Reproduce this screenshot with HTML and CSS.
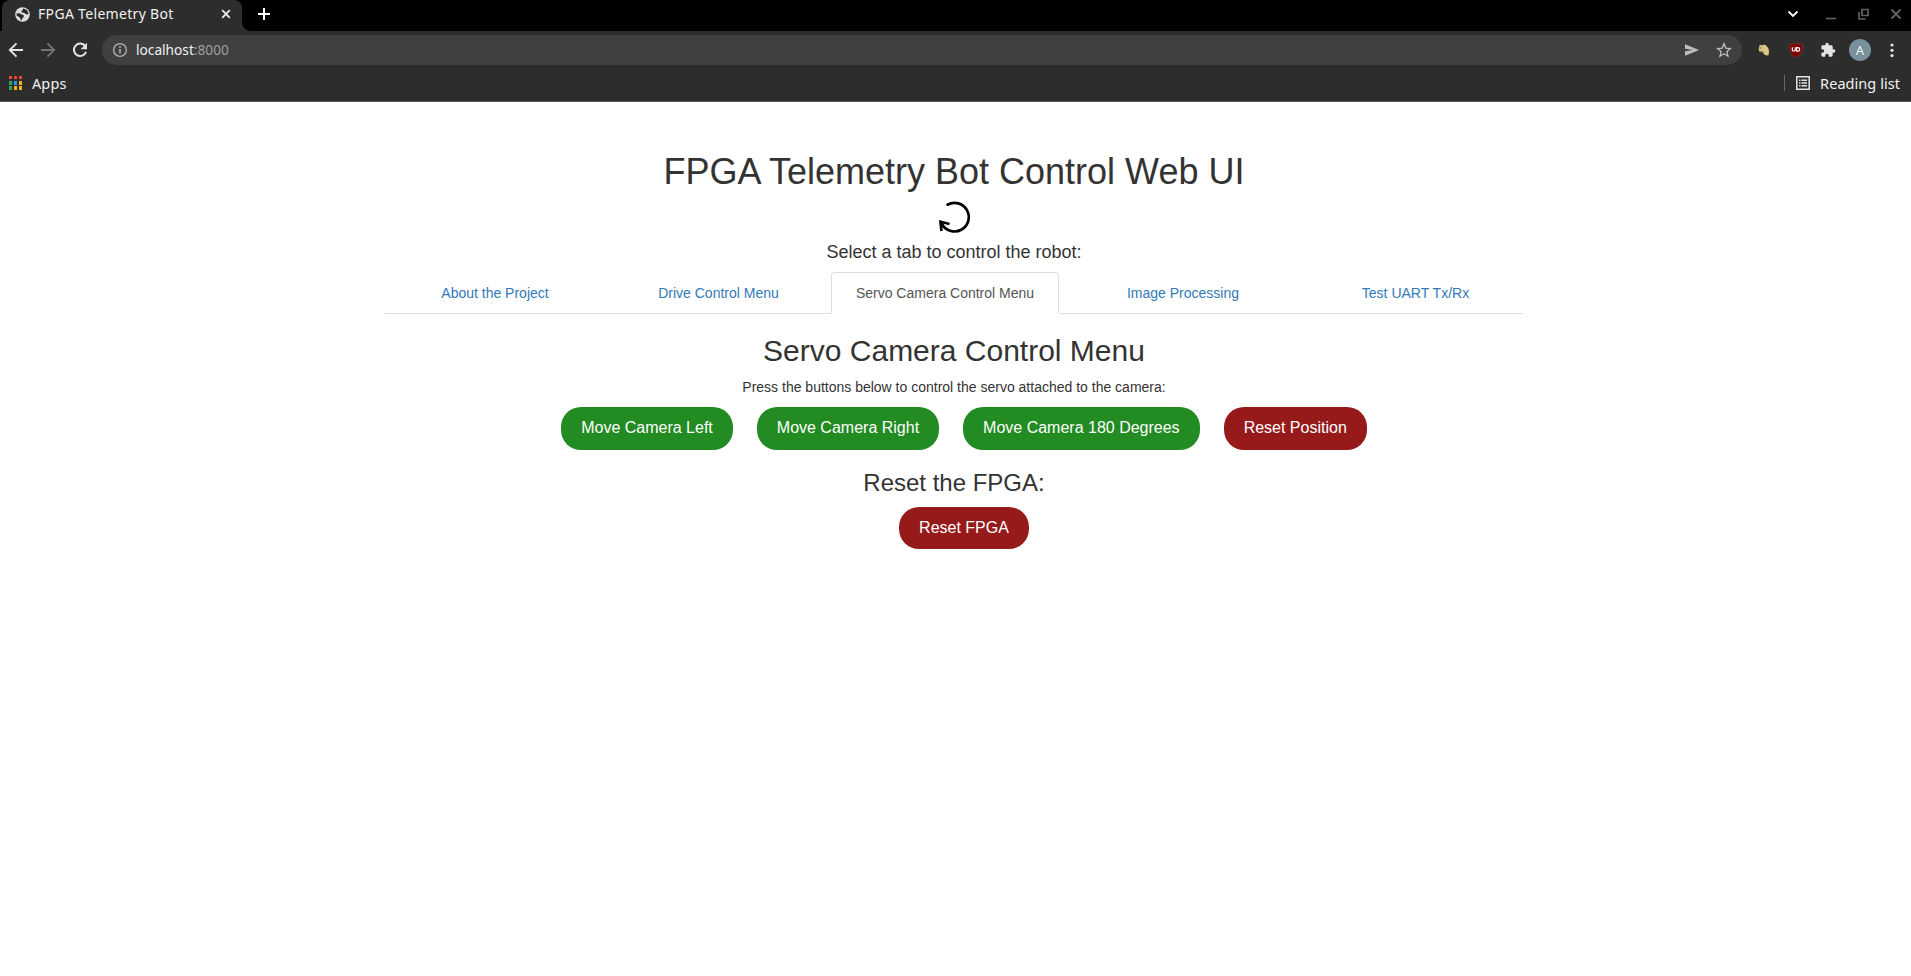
FILE: index.html
```html
<!DOCTYPE html>
<html lang="en">
<head>
<meta charset="utf-8">
<title>FPGA Telemetry Bot</title>
<link rel="stylesheet" href="styles.css">
</head>
<body>
<header class="browser">
  <div class="tabstrip">
    <div class="tab">
      <svg class="globe" width="15" height="15" viewBox="0 0 15 15"><circle cx="7.5" cy="7.5" r="7.3" fill="#dedede"/><path d="M1.600 6.500C3 6.200 5 6.300 6.500 7.300c1.200.9 2.300.3 2.500 1.700-.2 1.800-2 2-2.300 4L5.500 13.500C5.800 11.500 5 10.500 3.500 9.800L1.600 8.500zM8.300 1.600l2.700 1c1.500 1 2.400 2.600 2.500 4.400-1.500.8-3 .5-3.700-.7C9 5.500 7.500 6 6.500 5.200 6 4 7.800 3.600 8.300 1.600z" fill="#2b2b2b"/></svg>
      <span class="tab-title"><span class="fit">FPGA Telemetry Bot</span></span>
      <svg width="10" height="10" viewBox="0 0 10 10"><path d="M1.200 1.200 8.800 8.800M8.800 1.200 1.200 8.800" stroke="#eee" stroke-width="1.800"/></svg>
    </div>
    <svg class="plus" width="12" height="12" viewBox="0 0 12 12"><path d="M6 0V12M0 6H12" stroke="#fff" stroke-width="2"/></svg>
    <div class="window-controls">
      <svg width="12" height="12" viewBox="0 0 12 12"><path d="M1.500 3.500 6 8 10.500 3.500" fill="none" stroke="#fff" stroke-width="1.800"/></svg>
      <svg width="12" height="12" viewBox="0 0 12 12"><path d="M1 10.500H11" stroke="#626262" stroke-width="1.600"/></svg>
      <svg width="12" height="12" viewBox="0 0 12 12"><path d="M4 1.500h6v6H4zM1 4v7h6.500" fill="none" stroke="#626262" stroke-width="1.700"/></svg>
      <svg width="12" height="12" viewBox="0 0 12 12"><path d="M1.500 1.500 10.500 10.500M10.500 1.500 1.500 10.500" stroke="#626262" stroke-width="2"/></svg>
    </div>
  </div>
  <div class="toolbar">
    <div class="nav-buttons">
      <svg width="16" height="16" viewBox="0 0 16 16"><path d="M15 8H2M8.500 1.300 1.800 8l6.700 6.700" fill="none" stroke="#e4e4e4" stroke-width="1.900"/></svg>
      <svg width="16" height="16" viewBox="0 0 16 16"><path d="M1 8h13M7.500 1.300 14.200 8l-6.700 6.700" fill="none" stroke="#737373" stroke-width="1.900"/></svg>
      <svg width="16" height="16" viewBox="0 0 16 16"><path d="M13.200 4.200A6.200 6.200 0 1 0 14 9.800" fill="none" stroke="#e4e4e4" stroke-width="2"/><path d="M15 .8v6.400H8.600z" fill="#e4e4e4"/></svg>
    </div>
    <div class="address">
      <svg width="16" height="16" viewBox="0 0 16 16"><circle cx="8" cy="8" r="6.400" fill="none" stroke="#b0b2b5" stroke-width="1.400"/><path d="M8 7v4.500M8 4.300v1.600" stroke="#b0b2b5" stroke-width="1.600"/></svg>
      <span class="url"><span class="fit">localhost<span class="port">:8000</span></span></span>
      <svg class="send" width="16" height="14" viewBox="0 0 16 14"><path d="M1 1.300 15 7 1 12.700V8.200L9 7 1 5.800z" fill="#bdbfc2"/></svg>
      <svg width="16" height="16" viewBox="0 0 16 16"><path d="m8 1.800 1.800 4.300 4.700.4-3.500 3.100 1 4.600L8 11.800l-4 2.400 1-4.600-3.500-3.100 4.700-.4z" fill="none" stroke="#bdbfc2" stroke-width="1.300"/></svg>
    </div>
    <div class="extensions">
      <svg width="16" height="16" viewBox="0 0 16 16"><path d="M3 5 4 2.500l1.400 1C7.500 2.200 10 2.700 11 4.500c2 2 2.800 5 1.300 9-2.500.3-4.700-.9-5.300-3L3.300 9.500 2.600 7z" fill="#d8c682"/><path d="m3.500 5.800 2 .3M4.500 9.700l3 .3" stroke="#675f43"/></svg>
      <svg width="16" height="16" viewBox="0 0 16 16"><path d="M8 .7C10 2 12 2.400 14.700 2.300 15 8.500 13.500 13 8 15.500 2.500 13 1 8.500 1.300 2.300 4 2.400 6 2 8 .7z" fill="#800000" stroke="#703e3e" stroke-width=".7"/><path d="M4.300 5.300v2.700q0 1 1.100 1h.8q1 0 1-1V5.300M8.700 5.600H10q1.700 0 1.700 1.800T10 9.200H8.700z" fill="none" stroke="#fff" stroke-width="1.200"/></svg>
      <svg width="16" height="16" viewBox="0 0 24 24"><path d="M20.500 11H19V7c0-1.100-.9-2-2-2h-4V3.500a2.500 2.500 0 0 0-5 0V5H4c-1.100 0-2 .9-2 2v3.800h1.500a2.700 2.700 0 0 1 0 5.400H2V20c0 1.100.9 2 2 2h3.800v-1.500a2.700 2.700 0 0 1 5.400 0V22H17c1.100 0 2-.9 2-2v-4h1.500a2.500 2.500 0 0 0 0-5z" fill="#e4e4e4"/></svg>
      <span class="avatar">A</span>
      <svg width="4" height="16" viewBox="0 0 4 16"><g fill="#e4e4e4"><circle cx="2" cy="3" r="1.600"/><circle cx="2" cy="8.300" r="1.600"/><circle cx="2" cy="13.600" r="1.600"/></g></svg>
    </div>
  </div>
  <div class="bookmarks">
    <svg width="13" height="14" viewBox="0 0 13 14"><path d="M0 0h3v3H0zM5 0h3v3H5zM10 0h3v3h-3z" fill="#f04438"/><path d="M0 5h3v4H0zM0 10h3v4H0z" fill="#34a162"/><path d="M5 5h3v4H5z" fill="#2196f3"/><path d="M10 5h3v4h-3zM5 10h3v4H5zM10 10h3v4h-3z" fill="#fbb117"/></svg>
    <span class="apps"><span class="fit">Apps</span></span>
    <span class="separator"></span>
    <svg width="14" height="14" viewBox="0 0 14 14"><path d="M.8.800h12.400v12.400H.8z" fill="none" stroke="#e4e4e4" stroke-width="1.500"/><path d="M3 4.200h1.500M5.500 4.200H11M3 7h1.500M5.500 7H11M3 9.800h1.500M5.500 9.800H11" stroke="#e4e4e4" stroke-width="1.400"/></svg>
    <span class="reading"><span class="fit">Reading list</span></span>
  </div>
</header>
<main class="container">
  <h1>FPGA Telemetry Bot Control Web UI</h1>
  <svg class="loop" width="36" height="36" viewBox="0 0 36 36"><path d="M11.500 4.700A14.300 14.300 0 1 1 6.200 24.500" fill="none" stroke="#000" stroke-width="2.700" stroke-linecap="round"/><path d="M13.500 24 4.500 21.800 5.500 31" fill="none" stroke="#000" stroke-width="2.700"/></svg>
  <h4>Select a tab to control the robot:</h4>
  <nav class="tabs">
    <a>About the Project</a>
    <a>Drive Control Menu</a>
    <a class="active">Servo Camera Control Menu</a>
    <a>Image Processing</a>
    <a>Test UART Tx/Rx</a>
  </nav>
  <h2>Servo Camera Control Menu</h2>
  <p>Press the buttons below to control the servo attached to the camera:</p>
  <div class="buttons">
    <button class="btn tall">Move Camera Left</button>
    <button class="btn tall">Move Camera Right</button>
    <button class="btn tall">Move Camera 180 Degrees</button>
    <button class="btn tall red">Reset Position</button>
  </div>
  <h3>Reset the FPGA:</h3>
  <div class="buttons last"><button class="btn red">Reset FPGA</button></div>
</main>
</body>
</html>
```
FILE: styles.css
```css
* { box-sizing: border-box; }
body { margin: 0; background: #fff; color: #333; font: 14px/20px "Liberation Sans", Arial, sans-serif; overflow: hidden; }
svg { display: block; flex: none; }
.browser { height: 102px; background: #2d2d2d; border-bottom: 1px solid #555; color: #f1f1f1; font: 14px/20px "Noto Sans", sans-serif; }
.fit { white-space: nowrap; }
.tabstrip { height: 31px; background: #000; display: flex; align-items: center; padding: 0 9px 3px 2px; }
.tab { position: relative; width: 240px; height: 31px; margin-bottom: -3px; background: #2d2d2d; border-radius: 8px 8px 0 0; display: flex; align-items: center; padding: 0 11px 3px 13px; }
.tab::after { content: ""; position: absolute; left: 240px; bottom: 0; width: 8px; height: 8px; background: radial-gradient(circle at 8px 0, transparent 7.500px, #2d2d2d 8px); }
.tab-title { flex: 1; padding-left: 8px; font-size: 14px; letter-spacing: .32px; }
.plus { margin-left: 16px; }
.window-controls { margin-left: auto; display: flex; gap: 20.500px; }
.window-controls svg:first-child { margin-right: 5.500px; }
.toolbar { height: 38px; display: flex; align-items: center; padding: 0 17px 0 8px; }
.nav-buttons { display: flex; gap: 16px; }
.address { flex: 1; height: 30px; margin-left: 14px; border-radius: 15px; background: #404040; display: flex; align-items: center; padding: 0 10px; }
.url { flex: 1; padding-left: 8px; font-size: 13.700px; }
.port { color: #9aa0a6; }
.send { margin-right: 16px; }
.extensions { display: flex; align-items: center; gap: 16px; margin-left: 14px; }
.avatar { width: 22px; height: 22px; border-radius: 50%; background: #78909c; font-size: 13px; line-height: 22px; text-align: center; margin: 0 3px 0 -3px; }
.bookmarks { height: 28px; display: flex; align-items: center; padding: 0 11px 0 9px; }
.apps { margin: 0 0 1px 10px; font-size: 14.500px; letter-spacing: .1px; }
.separator { width: 1px; height: 16px; background: #666; margin: 0 11px 0 auto; }
.reading { margin: 0 0 1px 10px; font-size: 14.500px; letter-spacing: .05px; }
.container { width: 1140px; margin-left: 384px; text-align: center; padding-top: 50px; }
h1, h2, h3, h4, p { margin: 0; font-weight: 500; }
h1 { font-size: 36px; line-height: 40px; }
.loop { margin: 8px auto 0; }
h4 { font-size: 18px; line-height: 20px; margin-top: 6px; }
.tabs { display: grid; grid-template-columns: 222px 225px 228px 248px 217px; margin-top: 10px; }
.tabs a { height: 42px; padding: 11px 0; color: #337ab7; border: 1px solid transparent; border-bottom-color: #ddd; border-radius: 4px 4px 0 0; padding: 10px 0; }
.tabs .active { color: #555; border-color: #ddd #ddd #fff; }
h2 { font-size: 30px; line-height: 33px; margin-top: 20px; }
p { margin-top: 10px; }
.buttons { display: flex; justify-content: center; gap: 24px; padding-left: 20px; margin-top: 10px; }
.btn { border: 0; border-radius: 20px; height: 42px; padding: 0 20px; background: #228b22; color: #fff; font: 16px "Liberation Sans", Arial, sans-serif; }
.tall { height: 43px; padding-bottom: 1px; }
.red { background: #961a1a; }
h3 { font-size: 24px; line-height: 26px; margin-top: 20px; }
.last { margin-top: 11px; }
```
